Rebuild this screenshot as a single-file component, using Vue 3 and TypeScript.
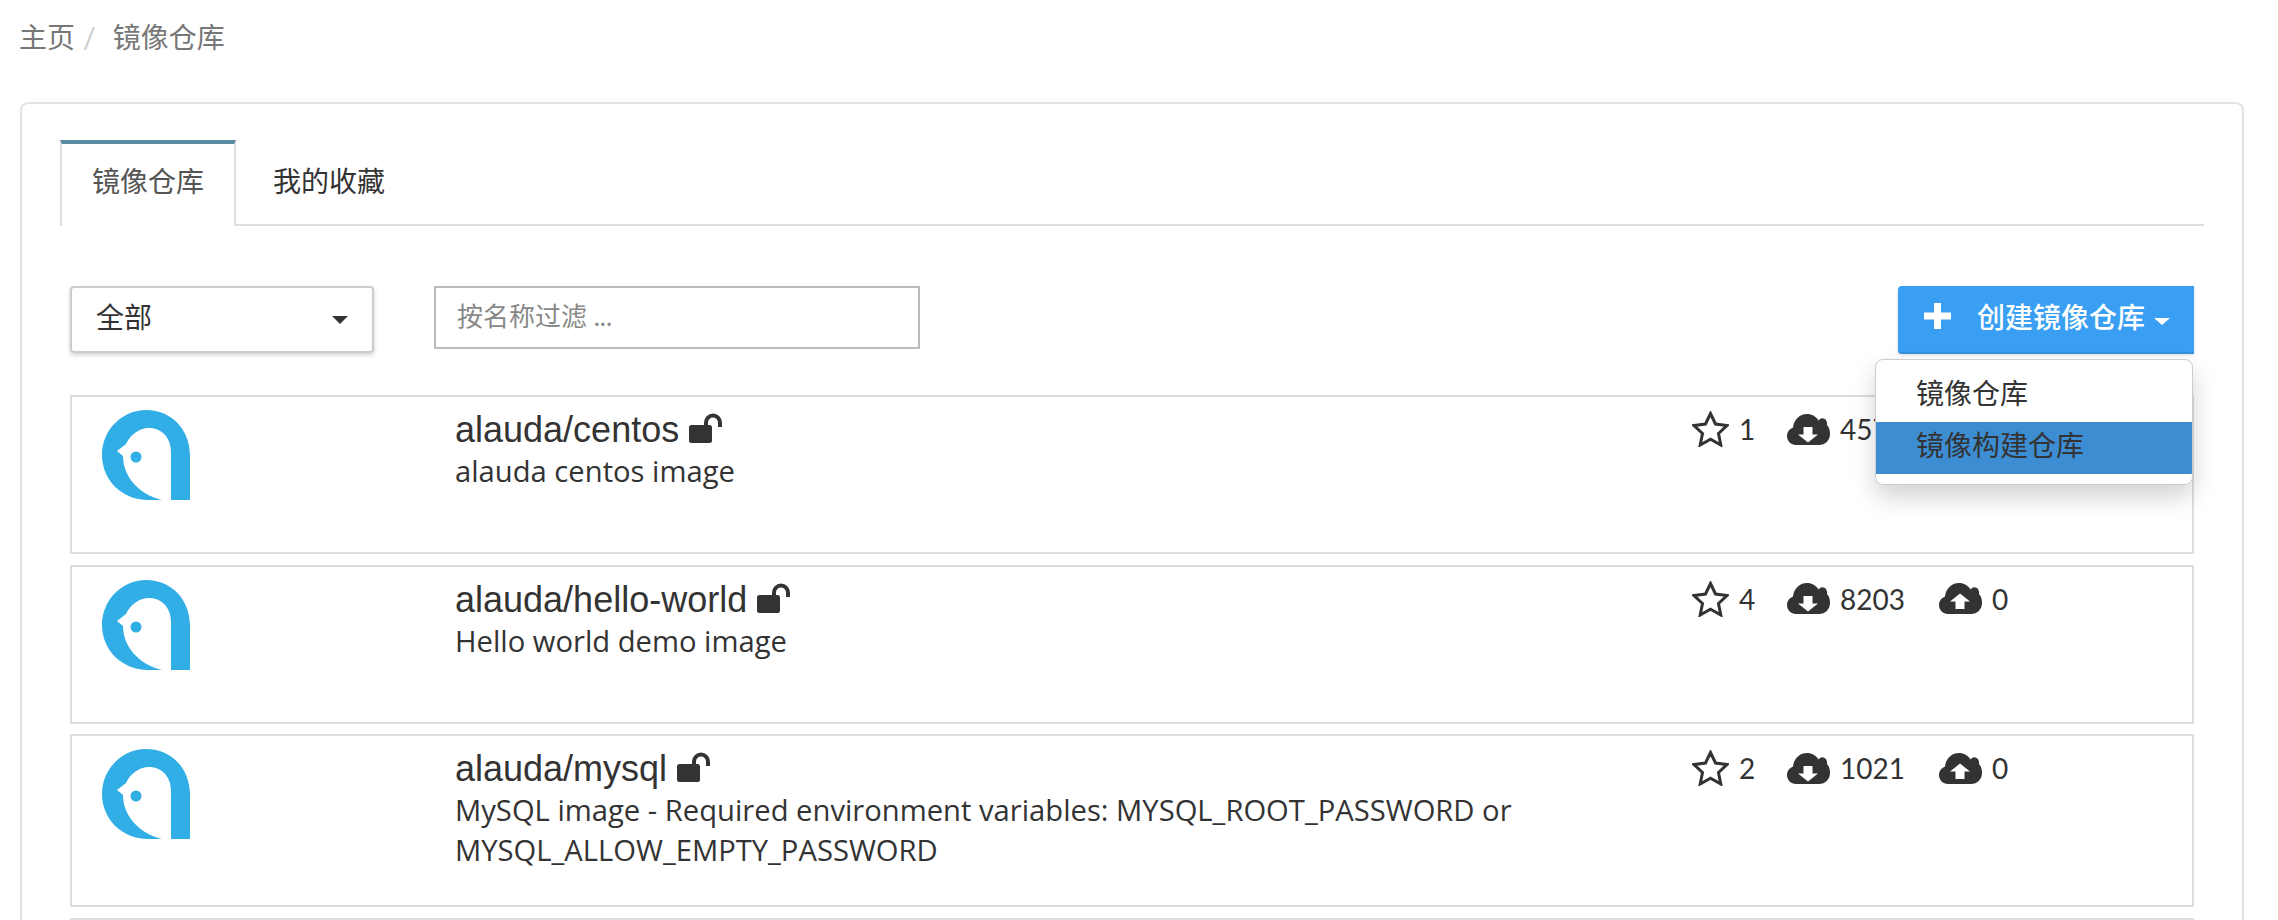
<template>
  <div class="page">
    <div class="breadcrumb">
      <span>主页</span>
      <span class="crumb-sep">/</span>
      <span>镜像仓库</span>
    </div>

    <div class="panel">
      <div class="tabs">
        <div class="tab tab-active">镜像仓库</div>
        <div class="tab">我的收藏</div>
      </div>

      <div class="toolbar">
        <div class="select">
          <span>全部</span>
          <i class="select-caret"></i>
        </div>
        <div class="filter">按名称过滤 ...</div>
        <div class="create">
          <button class="create-btn" type="button">
            <svg class="plus" viewBox="0 0 27 26"><path d="M10 0h7v9.500h10v7H17V26h-7V16.500H0v-7h10z" fill="#fff" /></svg>
            <span>创建镜像仓库</span>
            <i class="btn-caret"></i>
          </button>
          <ul class="menu">
            <li>镜像仓库</li>
            <li class="menu-active">镜像构建仓库</li>
          </ul>
        </div>
      </div>

      <div class="repo" v-for="repo in repos" :key="repo.name">
        <div class="repo-logo">
          <svg width="88" height="90" viewBox="0 0 88 90">
            <path fill="#31aee6" d="M44 0C70 0 88 20 88 46V90H69V42C69 28 60 18 47 18C37 18 28 25 24 34L15 41L21 46C21 66 36 84 60 90H46C20 90 0 70 0 45C0 20 20 0 44 0Z" />
            <circle cx="34" cy="47" r="5.500" fill="#31aee6" />
          </svg>
        </div>
        <div class="repo-info">
          <div class="repo-title">
            <span>{{ repo.name }}</span>
            <svg class="lock" width="33" height="30" viewBox="0 0 33 30">
              <rect x="0" y="12" width="23" height="18" rx="2.500" fill="#333" />
              <path d="M17 13V9.500a7 7 0 0 1 14 0V14" fill="none" stroke="#333" stroke-width="4" />
            </svg>
          </div>
          <div class="repo-desc">{{ repo.desc }}</div>
        </div>
        <div class="repo-stats">
          <div class="stat stat-star">
            <svg width="37" height="36" viewBox="0 0 37 36">
              <polygon points="18.500,2.500 23.500,13 35,14.500 26.500,22.500 28.800,34 18.500,28.300 8.200,34 10.500,22.500 2,14.500 13.500,13" fill="none" stroke="#333" stroke-width="3" />
            </svg>
            <span>{{ repo.stars }}</span>
          </div>
          <div class="stat stat-pull">
            <svg width="43" height="31" viewBox="0 0 43 31">
              <path fill="#333" d="M9 31C4 31 0 27 0 22C0 18 2.500 15 6 13.500C6.500 6 12.500 0 20 0C25 0 29 2.500 31.500 6.500C33 4.500 35 4 36.500 4.500C39 5 40.500 8 40 11C42 13 43 16 43 20C43 26.500 38 31 32 31Z" />
              <path fill="#fff" d="M16.500 13h9v7.500H31L21 28.500 11 20.500h5.500z" />
            </svg>
            <span>{{ repo.pulls }}</span>
          </div>
          <div class="stat">
            <svg width="43" height="31" viewBox="0 0 43 31">
              <path fill="#333" d="M9 31C4 31 0 27 0 22C0 18 2.500 15 6 13.500C6.500 6 12.500 0 20 0C25 0 29 2.500 31.500 6.500C33 4.500 35 4 36.500 4.500C39 5 40.500 8 40 11C42 13 43 16 43 20C43 26.500 38 31 32 31Z" />
              <path fill="#fff" d="M21 10.500l10 8h-5.500V26h-9v-7.500H11z" />
            </svg>
            <span>{{ repo.pushes }}</span>
          </div>
        </div>
      </div>
    </div>
  </div>
</template>

<script setup lang="ts">
interface Repo {
  name: string;
  desc: string;
  stars: number;
  pulls: number;
  pushes: number;
}

const repos: Repo[] = [
  { name: 'alauda/centos', desc: 'alauda centos image', stars: 1, pulls: 4571, pushes: 0 },
  { name: 'alauda/hello-world', desc: 'Hello world demo image', stars: 4, pulls: 8203, pushes: 0 },
  {
    name: 'alauda/mysql',
    desc: 'MySQL image - Required environment variables: MYSQL_ROOT_PASSWORD or MYSQL_ALLOW_EMPTY_PASSWORD',
    stars: 2,
    pulls: 1021,
    pushes: 0,
  },
  { name: 'alauda/nginx', desc: 'Nginx image', stars: 0, pulls: 0, pushes: 0 },
];
</script>

<style scoped>
.page {
  height: 920px;
  overflow: hidden;
  box-sizing: border-box;
  padding: 0 34px 0 20px;
  background: #fff;
  color: #333;
  font-family: Lato, "Noto Sans CJK SC", sans-serif;
  font-size: 28px;
}
.breadcrumb {
  height: 102px;
  box-sizing: border-box;
  padding-top: 17px;
  margin-left: -1px;
  line-height: 40px;
  color: #777;
  display: flex;
}
.crumb-sep {
  color: #ccc;
  margin: 0 17px 0 8px;
}
.panel {
  border: 2px solid #e3e3e3;
  border-bottom: 0;
  border-radius: 8px 8px 0 0;
  padding: 36px 38px 0;
  height: 900px;
}
.tabs {
  display: flex;
  height: 86px;
  box-sizing: border-box;
  border-bottom: 2px solid #ddd;
}
.tab {
  height: 86px;
  box-sizing: border-box;
  padding: 4px 37px 0 37px;
  line-height: 74px;
  white-space: nowrap;
}
.tab-active {
  width: 176px;
  padding: 0 30px;
  border: 2px solid #ddd;
  border-top: 4px solid #5a8ba3;
  border-bottom: 0;
  background: #fff;
  color: #555;
}
.toolbar {
  display: flex;
  align-items: flex-start;
  margin: 60px 10px 41px 10px;
}
.select {
  width: 304px;
  height: 67px;
  box-sizing: border-box;
  border: 2px solid #ccc;
  border-radius: 4px;
  box-shadow: 0 2px 4px rgba(0, 0, 0, 0.18);
  padding: 0 24px 7px 24px;
  display: flex;
  align-items: center;
  justify-content: space-between;
}
.select-caret {
  margin-top: 7px;
  border-left: 8px solid transparent;
  border-right: 8px solid transparent;
  border-top: 8px solid #333;
}
.filter {
  width: 486px;
  height: 63px;
  margin: 0 0 0 60px;
  box-sizing: border-box;
  border: 2px solid #bbb;
  padding-left: 21px;
  font-size: 26px;
  line-height: 56px;
  color: #888;
}
.create {
  margin-left: auto;
  position: relative;
}
.create-btn {
  width: 296px;
  height: 68px;
  border: 0;
  border-bottom: 2px solid #3492df;
  border-radius: 4px 0 0 4px;
  background: #3a9ff2;
  color: #fff;
  font: inherit;
  font-weight: 500;
  padding: 0 0 6px 26px;
  display: flex;
  align-items: center;
  box-shadow: 0 1px 3px rgba(0, 0, 0, 0.15);
}
.plus {
  width: 27px;
  height: 26px;
  margin-right: 26px;
}
.btn-caret {
  margin: 10px 0 0 9px;
  border-left: 8px solid transparent;
  border-right: 8px solid transparent;
  border-top: 7px solid #fff;
}
.menu {
  position: absolute;
  top: 73px;
  right: 1px;
  width: 318px;
  height: 126px;
  box-sizing: border-box;
  margin: 0;
  padding: 10px 0 0;
  list-style: none;
  background: #fff;
  border: 1px solid #ccc;
  border-radius: 8px;
  box-shadow: 0 12px 24px rgba(0, 0, 0, 0.175);
  z-index: 2;
}
.menu li {
  height: 52px;
  line-height: 46px;
  padding-left: 40px;
}
.menu-active {
  background: #3d8dd3;
}
.repo {
  display: flex;
  min-height: 159px;
  box-sizing: border-box;
  margin: 0 10px 10.500px;
  border: 2px solid #ddd;
  padding: 13px 0 35px 30px;
}
.repo-logo {
  width: 353px;
  flex: none;
}
.repo-info {
  width: 1237px;
  flex: none;
}
.repo-title {
  font-family: "Liberation Sans", "Noto Sans CJK SC", sans-serif;
  font-size: 36px;
  line-height: 40px;
  display: flex;
  align-items: flex-end;
}
.lock {
  margin: 0 0 7px 10px;
}
.repo-desc {
  font-family: "Open Sans", sans-serif;
  font-size: 29.200px;
  margin-top: 1px;
  line-height: 40px;
}
.repo-stats {
  display: flex;
  margin-top: -1px;
}
.stat {
  display: flex;
  align-items: center;
  height: 40px;
}
.stat span {
  margin-left: 10px;
}
.stat-star {
  width: 95px;
}
.stat-pull {
  width: 152px;
}
</style>

<style>
html,
body {
  margin: 0;
  background: #fff;
  overflow: hidden;
}
</style>
